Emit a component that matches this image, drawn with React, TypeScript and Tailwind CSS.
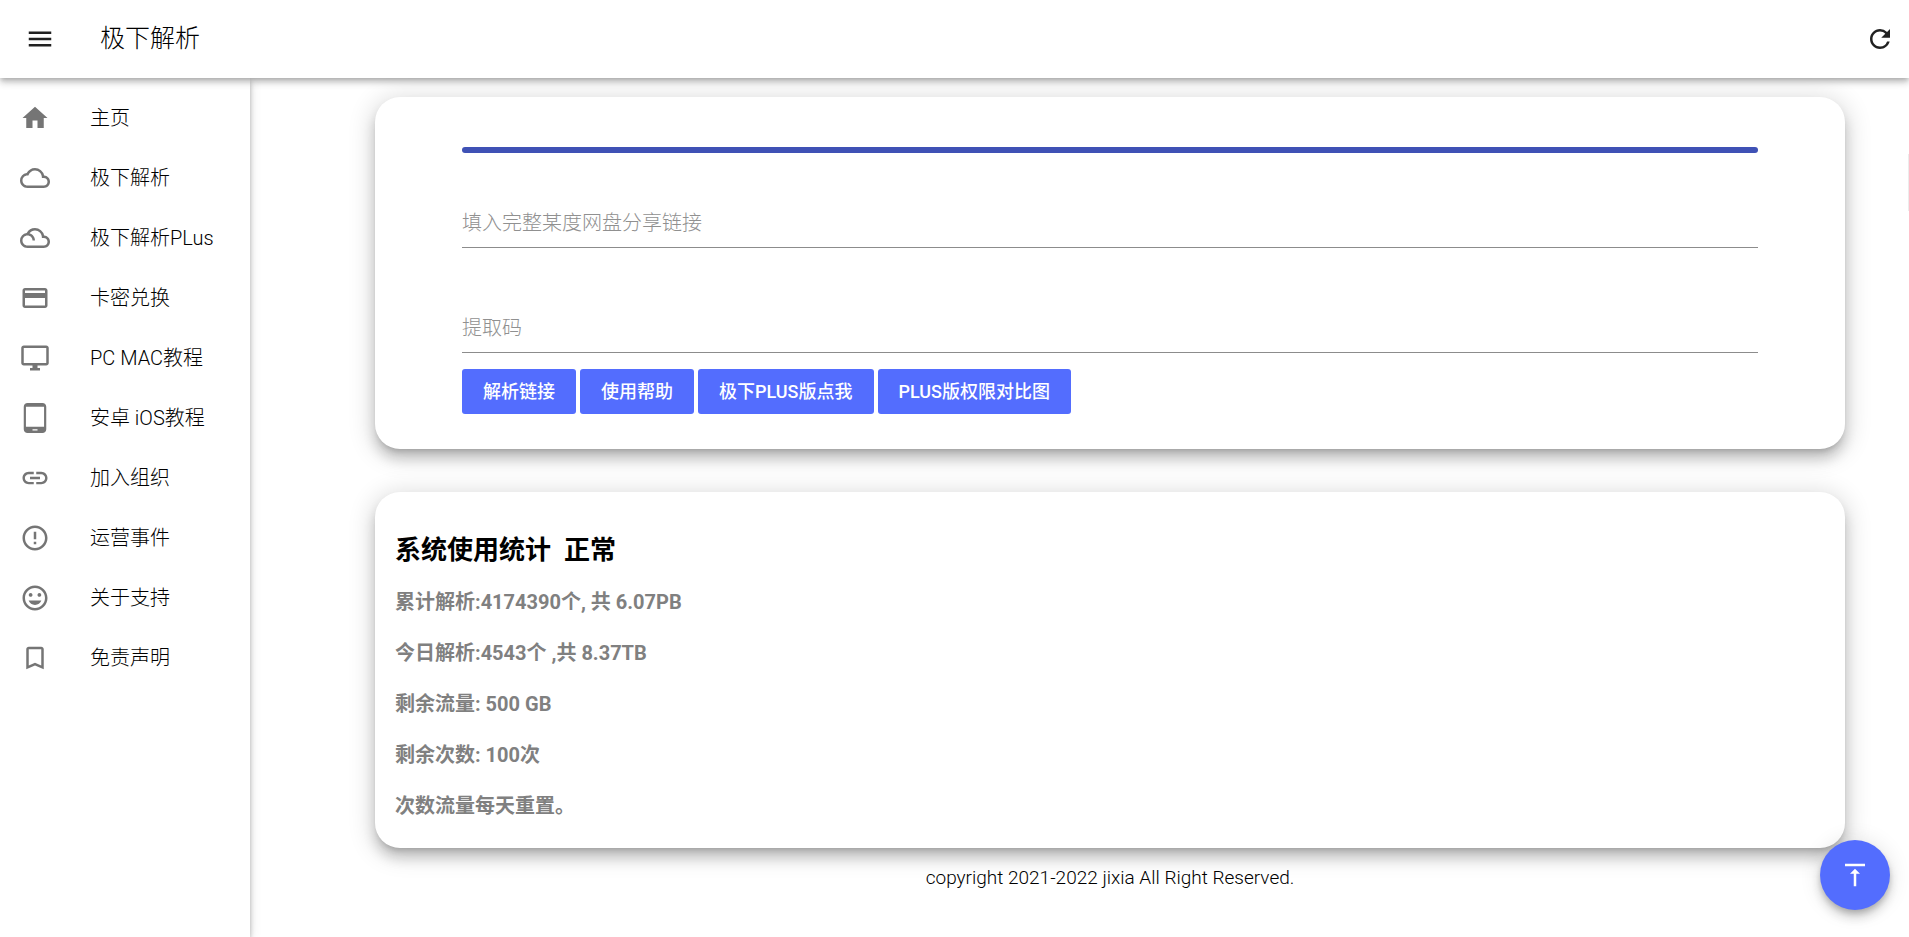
import type { IconType } from "react-icons";
import {
  MdBookmarkBorder,
  MdCloudQueue,
  MdCreditCard,
  MdErrorOutline,
  MdFilterDrama,
  MdHome,
  MdLink,
  MdMenu,
  MdOutlineDesktopWindows,
  MdRefresh,
  MdTabletAndroid,
  MdTagFaces,
  MdVerticalAlignTop,
} from "react-icons/md";

const navItems: { icon: IconType; label: string }[] = [
  { icon: MdHome, label: "主页" },
  { icon: MdCloudQueue, label: "极下解析" },
  { icon: MdFilterDrama, label: "极下解析PLus" },
  { icon: MdCreditCard, label: "卡密兑换" },
  { icon: MdOutlineDesktopWindows, label: "PC MAC教程" },
  { icon: MdTabletAndroid, label: "安卓 iOS教程" },
  { icon: MdLink, label: "加入组织" },
  { icon: MdErrorOutline, label: "运营事件" },
  { icon: MdTagFaces, label: "关于支持" },
  { icon: MdBookmarkBorder, label: "免责声明" },
];

const actions = ["解析链接", "使用帮助", "极下PLUS版点我", "PLUS版权限对比图"];

const stats = [
  "累计解析:4174390个, 共 6.07PB",
  "今日解析:4543个 ,共 8.37TB",
  "剩余流量: 500 GB",
  "剩余次数: 100次",
  "次数流量每天重置。",
];

const cardClass =
  "rounded-[25px] bg-white shadow-[0_6px_6px_-4px_rgba(0,0,0,0.2),0_10px_12px_1px_rgba(0,0,0,0.14),0_4px_24px_4px_rgba(0,0,0,0.14)]";

function Header() {
  return (
    <header className="sticky top-0 z-20 flex h-[78px] items-center bg-white pr-[14px] pl-[25px] shadow-[0_2px_5px_-1px_rgba(0,0,0,0.2),0_5px_6px_0_rgba(0,0,0,0.14),0_1px_12px_0_rgba(0,0,0,0.12)]">
      <button type="button" aria-label="菜单" className="cursor-pointer">
        <MdMenu size={30} />
      </button>
      <h1 className="ml-[45px] text-[25px] leading-[38px] font-light text-black">极下解析</h1>
      <button type="button" aria-label="刷新" className="ml-auto cursor-pointer">
        <MdRefresh size={30} />
      </button>
    </header>
  );
}

function Sidebar() {
  return (
    <aside className="z-10 w-[250px] shrink-0 bg-white py-[10px] shadow-[0_2px_5px_-1px_rgba(0,0,0,0.2),0_5px_6px_0_rgba(0,0,0,0.14),0_1px_12px_0_rgba(0,0,0,0.12)]">
      <nav>
        {navItems.map(({ icon: Icon, label }) => (
          <a key={label} href="#" className="flex h-[60px] items-center gap-10 px-5 text-xl font-light text-black">
            <Icon size={30} className="shrink-0 text-[#757575]" />
            {label}
          </a>
        ))}
      </nav>
    </aside>
  );
}

function TextField({ label }: { label: string }) {
  return (
    <input
      type="text"
      aria-label={label}
      placeholder={label}
      className="block h-[46px] w-full border-b border-[#8c8c8c] pb-1 text-xl font-light outline-none placeholder:text-[#909090]"
    />
  );
}

function ParseCard() {
  return (
    <section className={`${cardClass} px-[87px] pt-[50px] pb-[35px]`}>
      <div className="h-[6px] rounded-[3px] bg-[#3f51b5]" />
      <form onSubmit={(e) => e.preventDefault()}>
        <div className="mt-[49px]">
          <TextField label="填入完整某度网盘分享链接" />
        </div>
        <div className="mt-[59px]">
          <TextField label="提取码" />
        </div>
        <div className="mt-4 flex flex-wrap gap-1">
          {actions.map((action) => (
            <button
              key={action}
              type="button"
              className="h-[45px] cursor-pointer rounded-[3px] bg-[#536dfe] px-[21px] text-lg font-medium text-white"
            >
              {action}
            </button>
          ))}
        </div>
      </form>
    </section>
  );
}

function StatsCard() {
  return (
    <section className={`${cardClass} mt-[43px] px-5 pt-[39px] pb-[16px]`}>
      <h2 className="text-[26px] leading-[38px] font-bold whitespace-pre text-black">系统使用统计  正常</h2>
      <div className="mt-2">
        {stats.map((line) => (
          <p key={line} className="text-xl leading-[51px] font-bold text-[#808080]">
            {line}
          </p>
        ))}
      </div>
    </section>
  );
}

export default function App() {
  return (
    <div className="flex min-h-screen flex-col bg-white font-['Roboto','Noto_Sans_CJK_SC',sans-serif] text-[#212121]">
      <Header />
      <div className="flex flex-1">
        <Sidebar />
        <main className="flex-1 pt-[19px] pr-16 pl-[125px]">
          <ParseCard />
          <StatsCard />
          <footer className="mt-4 text-center text-[19px] leading-7 font-light text-black">
            copyright 2021-2022 jixia All Right Reserved.
          </footer>
        </main>
      </div>
      {/* edge of the collapsed side handle */}
      <div className="fixed top-[154px] right-0 h-[57px] w-px bg-[#ececec]" />
      <button
        type="button"
        aria-label="返回顶部"
        className="fixed right-[19px] bottom-[27px] z-30 flex size-[70px] cursor-pointer items-center justify-center rounded-full bg-[#536dfe] text-white shadow-[0_4px_6px_-1px_rgba(0,0,0,0.2),0_8px_12px_0_rgba(0,0,0,0.14),0_1px_22px_0_rgba(0,0,0,0.12)]"
      >
        <MdVerticalAlignTop size={30} />
      </button>
    </div>
  );
}
